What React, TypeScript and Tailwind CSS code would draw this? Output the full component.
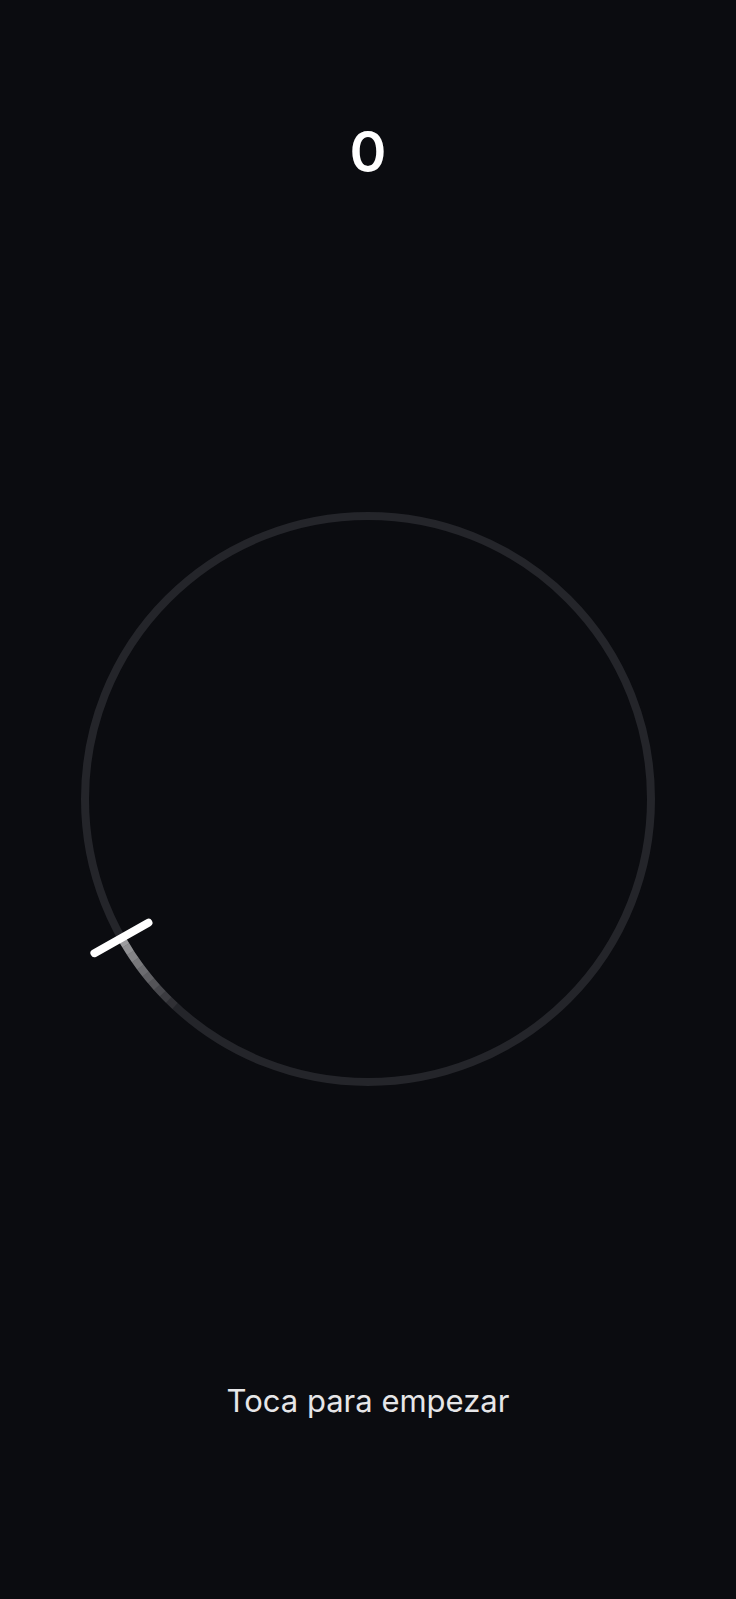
import React from "react";

const C = 288;
const R = 283;

function pt(r: number, deg: number) {
  const a = (deg * Math.PI) / 180;
  return [C + r * Math.cos(a), C + r * Math.sin(a)];
}

function arc(r: number, a1: number, a2: number) {
  const [x1, y1] = pt(r, a1);
  const [x2, y2] = pt(r, a2);
  return `M ${x1} ${y1} A ${r} ${r} 0 0 ${a2 > a1 ? 1 : 0} ${x2} ${y2}`;
}

export default function App() {
  const markerAngle = 150.6;
  const trailEnd = 133;
  const n = 10;
  const segs = Array.from({ length: n }, (_, i) => {
    const a1 = markerAngle - ((markerAngle - trailEnd) * i) / n;
    const a2 = markerAngle - ((markerAngle - trailEnd) * (i + 1)) / n;
    const op = 0.55 * (1 - i / n);
    return { a1, a2, op };
  });
  const [mx1, my1] = pt(R - 31, markerAngle);
  const [mx2, my2] = pt(R + 31, markerAngle);

  return (
    <div
      className="w-full h-[1599px] bg-[#0b0c10] flex flex-col items-center overflow-hidden"
      style={{ fontFamily: "Inter, 'Noto Sans', sans-serif" }}
    >
      <div className="pt-[124px] text-[56px] leading-[56px] font-semibold text-white">0</div>
      <svg width="576" height="576" viewBox="0 0 576 576" className="mt-[331px] overflow-visible">
        <circle cx={C} cy={C} r={R} fill="none" stroke="#24252a" strokeWidth="8" />
        {segs.map((s, i) => (
          <path
            key={i}
            d={arc(R, s.a2, s.a1)}
            fill="none"
            stroke="white"
            strokeOpacity={s.op}
            strokeWidth="8"
          />
        ))}
        <line x1={mx1} y1={my1} x2={mx2} y2={my2} stroke="white" strokeWidth="8" strokeLinecap="round" />
      </svg>
      <div className="mt-[298px] text-[31px] leading-[32px] text-[#e6e6e8]">Toca para empezar</div>
    </div>
  );
}
